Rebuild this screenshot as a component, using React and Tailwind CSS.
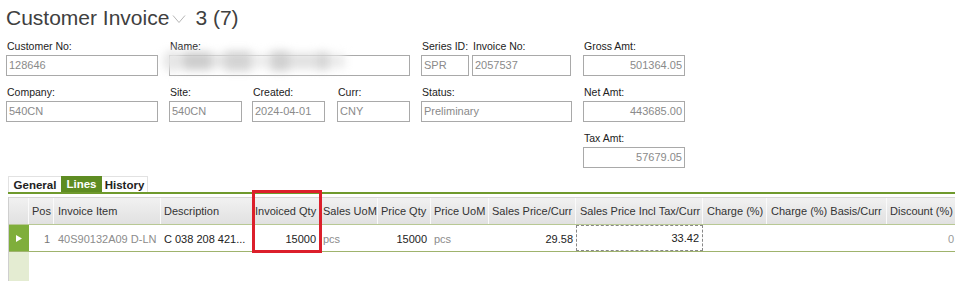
import React from 'react';

const FONT = { fontFamily: '"Liberation Sans", Arial, sans-serif' };

function Field({ label, value, className, right, children }) {
  return (
    <div className={`shrink-0 ${className}`}>
      <div className="h-[13px] text-[10.5px] leading-[13px] text-[#222] whitespace-nowrap pl-[1px]">{label}</div>
      <div
        className={`relative mt-[2px] h-[21px] border border-[#a9a9a9] bg-white text-[11px] leading-[19px] text-[#8a8a8a] px-[2px] ${right ? 'text-right' : ''}`}
      >
        {value}
        {children}
      </div>
    </div>
  );
}

const cols = [
  { h: 'Pos', w: 'w-[25px]', ha: 'text-right pr-[2px]', v: '1', va: 'text-right pr-[4px] text-[#777]' },
  { h: 'Invoice Item', w: 'w-[107px]', ha: 'pl-[4px]', v: '40S90132A09 D-LN', va: 'pl-[4px] text-[#8c8c8c]' },
  { h: 'Description', w: 'w-[92px]', ha: 'pl-[3px]', v: 'C 038 208 421...', va: 'pl-[3px] text-[#222]' },
  { h: 'Invoiced Qty', w: 'w-[68px]', ha: 'pl-[2px]', v: '15000', va: 'text-right pr-[5px] text-[#222]' },
  { h: 'Sales UoM', w: 'w-[57px]', ha: 'pl-[2px]', v: 'pcs', va: 'pl-[2px] text-[#8c8c8c]' },
  { h: 'Price Qty', w: 'w-[53px]', ha: 'pl-[3px]', v: '15000', va: 'text-right pr-[4px] text-[#222]' },
  { h: 'Price UoM', w: 'w-[58px]', ha: 'pl-[3px]', v: 'pcs', va: 'pl-[3px] text-[#8c8c8c]' },
  { h: 'Sales Price/Curr', w: 'w-[87px]', ha: 'pl-[3px]', v: '29.58', va: 'text-right pr-[3px] text-[#222]' },
  { h: 'Sales Price Incl Tax/Curr', w: 'w-[127px]', ha: 'pl-[4px]', v: '33.42', va: 'text-right pr-[3px] text-[#222] border border-dashed border-[#888] leading-[25px]' },
  { h: 'Charge (%)', w: 'w-[64px]', ha: 'pl-[4px]', v: '', va: '' },
  { h: 'Charge (%) Basis/Curr', w: 'w-[120px]', ha: 'pl-[4px]', v: '', va: '' },
  { h: 'Discount (%)', w: 'w-[73px]', ha: 'pl-[3px]', v: '0', va: 'text-right pr-[6px] text-[#999]' },
];

export default function App() {
  return (
    <div className="h-[281px] w-[955px] overflow-hidden bg-white" style={FONT}>
      {/* Title */}
      <div className="flex items-center h-[26px] mt-[5px] pl-[6px] text-[21px] leading-[26px] text-[#404040]">
        <span>Customer Invoice</span>
        <svg width="14" height="10" viewBox="0 0 14 10" className="ml-[3px] mt-[2px]">
          <path d="M1 1.5 L7 8.5 L13 1.5" fill="none" stroke="#b5b5b5" strokeWidth="1" />
        </svg>
        <span className="ml-[9px]">3 (7)</span>
      </div>

      {/* Header form */}
      <div className="flex mt-[9px] pl-[6px]">
        <div className="flex flex-col gap-[10px]">
          <div className="flex">
            <Field label="Customer No:" value="128646" className="w-[152px]" />
            <Field label="Name:" value="" className="w-[241px] ml-[11px]">
              <div className="absolute -left-[7px] -top-[6px] flex items-center blur-[4px]">
                <div className="h-[22px] w-[20px] rounded-full bg-[#e6e6e6]" />
                <div className="h-[18px] w-[28px] bg-[#cdcdcd]" />
                <div className="h-[14px] w-[14px] bg-[#e4e4e4]" />
                <div className="h-[20px] w-[26px] bg-[#d4d4d4]" />
                <div className="h-[14px] w-[20px] bg-[#ececec]" />
                <div className="h-[20px] w-[18px] bg-[#d0d0d0]" />
                <div className="h-[16px] w-[28px] bg-[#e2e2e2]" />
                <div className="h-[18px] w-[12px] bg-[#d6d6d6]" />
                <div className="h-[14px] w-[16px] bg-[#ebebeb]" />
              </div>
            </Field>
            <Field label="Series ID:" value="SPR" className="w-[48px] ml-[11px]" />
            <Field label="Invoice No:" value="2057537" className="w-[99px] ml-[3px]" />
          </div>
          <div className="flex">
            <Field label="Company:" value="540CN" className="w-[152px]" />
            <Field label="Site:" value="540CN" className="w-[73px] ml-[11px]" />
            <Field label="Created:" value="2024-04-01" className="w-[73px] ml-[10px]" />
            <Field label="Curr:" value="CNY" className="w-[73px] ml-[12px]" />
            <Field label="Status:" value="Preliminary" className="w-[151px] ml-[11px]" />
          </div>
        </div>
        <div className="flex flex-col gap-[10px] ml-[11px]">
          <Field label="Gross Amt:" value="501364.05" className="w-[102px]" right />
          <Field label="Net Amt:" value="443685.00" className="w-[102px]" right />
          <Field label="Tax Amt:" value="57679.05" className="w-[102px]" right />
        </div>
      </div>

      {/* Tabs + grid */}
      <div className="relative mt-[8px]">
        <div className="flex ml-[8px] h-[16px] text-[11.5px] leading-[16px] font-bold text-[#222]">
          <div className="w-[53px] text-center border-t border-l border-[#e2e2e2]">General</div>
          <div className="w-[41px] text-center bg-[#5e8c22] text-white">Lines</div>
          <div className="w-[46px] text-center border-t border-r border-[#e2e2e2]">History</div>
        </div>
        <div className="ml-[8px] h-[2px] bg-[#6f9a2d]" />

        <div className="ml-[8px] mt-[3px] text-[11px] border-l border-[#cfcfcf]">
          {/* header row */}
          <div className="flex h-[28px] border-t border-[#d6d6d6] border-b border-b-[#b8c894] bg-gradient-to-b from-[#f1f1f1] to-[#e1e1e1] text-[#333] leading-[26px]">
            <div className="w-[20px] shrink-0 border-r border-[#fafafa]" />
            {cols.map((c) => (
              <div key={c.h} className={`${c.w} ${c.ha} shrink-0 whitespace-nowrap overflow-hidden border-r border-[#fafafa]`}>
                {c.h}
              </div>
            ))}
          </div>
          {/* data row */}
          <div className="flex h-[27px] border-b border-[#9fb36d] leading-[28px]">
            <div className="w-[20px] shrink-0 bg-[#7fae3b] flex items-center justify-center">
              <svg width="6" height="7" viewBox="0 0 6 7">
                <path d="M0 0 L6 3.5 L0 7 Z" fill="#fff" />
              </svg>
            </div>
            {cols.map((c) => (
              <div key={c.h} className={`${c.w} ${c.va} shrink-0 whitespace-nowrap overflow-hidden`}>
                {c.v}
              </div>
            ))}
          </div>
          {/* empty area */}
          <div className="flex h-[40px]">
            <div className="w-[20px] shrink-0 bg-[#e4ecd2]" />
          </div>
        </div>

        {/* annotation box */}
        <div className="absolute left-[252px] top-[14px] w-[70px] h-[63px] border-[3px] border-[#dc1f2b]" />
      </div>
    </div>
  );
}
